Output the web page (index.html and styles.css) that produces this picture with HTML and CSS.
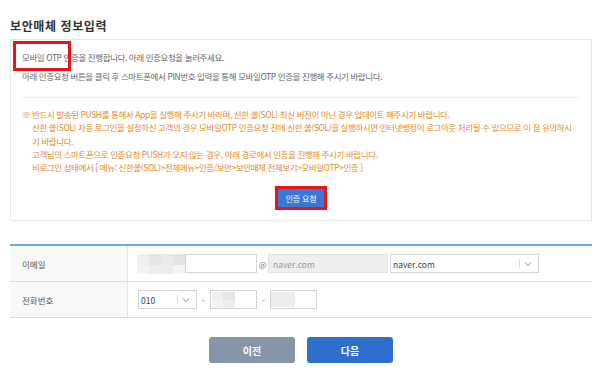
FILE: index.html
```html
<!DOCTYPE html>
<html lang="ko">
<head>
    <meta charset="UTF-8">
    <meta name="viewport" content="width=device-width, initial-scale=1.0">
    <title>보안매체 정보입력</title>
    <link rel="stylesheet" href="styles.css">
</head>
<body>

    <div class="page">
        <h2 class="title">보안매체 정보입력</h2>

        <!-- 안내 박스 -->
        <div class="info-box">
            <span class="mark mark-otp"></span>
            <div class="intro">
                <p>모바일 OTP 인증을 진행합니다. 아래 인증요청을 눌러주세요.</p>
                <p>아래 인증요청 버튼을 클릭 후 스마트폰에서 PIN번호 입력을 통해 모바일OTP 인증을 진행해 주시기 바랍니다.</p>
            </div>
            <ul class="notice">
                <li class="first">※ 반드시 발송된 PUSH를 통해서 App을 실행해 주시기 바라며, 신한 쏠(SOL) 최신 버전이 아닌 경우 업데이트 해주시기 바랍니다.</li>
                <li>신한 쏠(SOL) 자동 로그인을 설정하신 고객의 경우 모바일OTP 인증요청 전에 신한 쏠(SOL)을 실행하시면 인터넷뱅킹이 로그아웃 처리될 수 있으므로 이 점 유의하시<br>기 바랍니다.</li>
                <li>고객님의 스마트폰으로 인증요청 PUSH가 오지 않는 경우, 아래 경로에서 인증을 진행해 주시기 바랍니다.</li>
                <li>비로그인 상태에서 [ 메뉴: 신한쏠(SOL)&gt;전체메뉴&gt;인증/보안&gt;보안매체 전체보기&gt;모바일OTP&gt;인증 ]</li>
            </ul>
            <div class="btn-area">
                <button class="btn-auth">인증 요청</button>
            </div>
        </div>

        <!-- 입력 폼 -->
        <table class="form-table">
            <tr>
                <th>이메일</th>
                <td>
                    <div class="field-row">
                        <span class="mosaic mosaic-email">
                            <i class="c1"></i><i class="c2"></i><i class="c3"></i><i class="c4"></i>
                            <i class="c5"></i><i class="c6"></i><i class="c7"></i><i class="c8"></i>
                        </span>
                        <span class="input w-email-id"></span>
                        <span class="sep at">@</span>
                        <span class="input disabled w-domain">naver.com</span>
                        <span class="select w-domain-sel">
                            <span class="val">naver.com</span>
                            <span class="bar"></span>
                            <svg class="chev" width="8" height="6" viewBox="0 0 8 6"><polyline points="1,1.5 4,4.5 7,1.5" fill="none" stroke="#888" stroke-width="1"/></svg>
                        </span>
                    </div>
                </td>
            </tr>
            <tr>
                <th>전화번호</th>
                <td>
                    <div class="field-row">
                        <span class="select w-phone-sel">
                            <span class="val">010</span>
                            <span class="bar"></span>
                            <svg class="chev" width="8" height="6" viewBox="0 0 8 6"><polyline points="1,1.5 4,4.5 7,1.5" fill="none" stroke="#888" stroke-width="1"/></svg>
                        </span>
                        <span class="sep dash">-</span>
                        <span class="input w-phone p-mid">
                            <span class="mosaic mosaic-mid"><i class="c1"></i><i class="c2"></i><i class="c5"></i><i class="c6"></i></span>
                        </span>
                        <span class="sep dash">-</span>
                        <span class="input w-phone p-last">
                            <span class="mosaic mosaic-last"></span>
                        </span>
                    </div>
                </td>
            </tr>
        </table>

        <div class="bottom-btns">
            <button class="btn btn-prev">이전</button>
            <button class="btn btn-next">다음</button>
        </div>
    </div>

</body>
</html>
```

FILE: styles.css
```css
body {
    margin: 0;
    background-color: #ffffff;
    font-family: "Noto Sans CJK KR", "Noto Sans", sans-serif;
    color: #555;
}

.page {
    width: 582px;
    padding: 0 8px 0 10px;
}

.title {
    margin: 0 0 5px;
    padding-top: 18px;
    font-size: 12px;
    line-height: 16px;
    font-weight: 700;
    color: #333;
    letter-spacing: 0.6px;
}

/* 안내 박스 */
.info-box {
    position: relative;
    border: 1px solid #e6e6e6;
    padding: 8px 11px 0 11px;
    height: 172px;
}

.mark {
    position: absolute;
    border: 3px solid #e8141c;
    box-sizing: border-box;
}

.mark-otp {
    left: 2px;
    top: 1px;
    width: 58px;
    height: 30px;
}

.intro {
    border-bottom: 1px solid #eeeeee;
    padding-bottom: 11px;
}

.intro p {
    margin: 0;
    font-size: 8.5px;
    line-height: 19px;
    letter-spacing: -0.4px;
    color: #666;
    white-space: nowrap;
}

.notice {
    list-style: none;
    margin: 10px 0 0;
    padding: 0 0 0 10px;
}

.notice li {
    font-size: 8.5px;
    line-height: 13.3px;
    letter-spacing: -0.4px;
    color: #e3892a;
    white-space: nowrap;
}

.notice li.first {
    text-indent: -10px;
}

.btn-area {
    display: flex;
    justify-content: center;
    margin-top: 15px;
}

.btn-auth {
    height: 18px;
    width: 46px;
    padding: 0;
    border: none;
    background-color: #3a78d8;
    color: #fff;
    font-family: inherit;
    font-size: 8px;
    letter-spacing: -0.2px;
    outline: 3px solid #e8141c;
}

/* 입력 폼 */
.form-table {
    width: 582px;
    margin-top: 23px;
    border-collapse: collapse;
    border-top: 2px solid #7aa3e2;
}

.form-table th,
.form-table td {
    height: 35px;
    padding: 0;
    border-bottom: 1px solid #dcdcdc;
}

.form-table tr:last-child th,
.form-table tr:last-child td {
    border-bottom-color: #d8d8e6;
}

.form-table th {
    width: 105px;
    padding-left: 12px;
    background-color: #f8f8f8;
    border-right: 1px solid #e4e4e4;
    text-align: left;
    font-weight: 400;
    font-size: 8.5px;
    color: #555;
}

.field-row {
    display: flex;
    align-items: center;
    padding-left: 9px;
}

.input,
.select {
    box-sizing: border-box;
    height: 19px;
    border: 1px solid #d3d3d3;
    background: #fff;
    display: flex;
    align-items: center;
    font-size: 8.5px;
    color: #444;
}

.input.disabled {
    background-color: #eeeeee;
    border-color: #e2e2e2;
    color: #999;
    padding-left: 4px;
}

.w-email-id { width: 72px; }
.w-domain { width: 120px; }
.w-domain-sel { width: 149px; margin-left: 2px; }
.w-phone-sel { width: 59px; margin-left: 1px; }
.w-phone { width: 47px; }

.select .val {
    flex: 1;
    padding-left: 2px;
}

.select .bar {
    width: 1px;
    height: 9px;
    background-color: #ddd;
    margin-right: 4px;
}

.select .chev {
    margin-right: 6px;
}

.sep {
    font-size: 8.5px;
    color: #777;
    text-align: center;
}

.sep.at { width: 11px; }
.sep.dash { width: 13px; }

/* 가려진 입력값 */
.mosaic {
    display: grid;
}

.mosaic i {
    display: block;
}

.mosaic-email {
    width: 48px;
    height: 20px;
    grid-template-columns: repeat(4, 12px);
    grid-template-rows: 11px 9px;
}

.mosaic-mid {
    margin-left: 1px;
    width: 23px;
    height: 16px;
    grid-template-columns: 11px 12px;
    grid-template-rows: 8px 8px;
}

.mosaic-last {
    width: 24px;
    height: 15px;
    background-color: #ececec;
}

.mosaic .c1 { background-color: #efefef; }
.mosaic .c2 { background-color: #e5e5e5; }
.mosaic .c3 { background-color: #e9e9e9; }
.mosaic .c4 { background-color: #e3e4e7; }
.mosaic .c5 { background-color: #f3f3f3; }
.mosaic .c6 { background-color: #ededed; }
.mosaic .c7 { background-color: #ececec; }
.mosaic .c8 { background-color: #f5f5f5; }

.p-last { padding: 0; }

/* 하단 버튼 */
.bottom-btns {
    display: flex;
    justify-content: center;
    gap: 12px;
    margin-top: 19px;
}

.btn {
    width: 86px;
    height: 26px;
    border: none;
    border-radius: 3px;
    color: #fff;
    font-family: inherit;
    font-size: 10px;
    font-weight: 700;
}

.btn-prev {
    background-color: #8795a9;
}

.btn-next {
    background-color: #2c6fce;
}
```
